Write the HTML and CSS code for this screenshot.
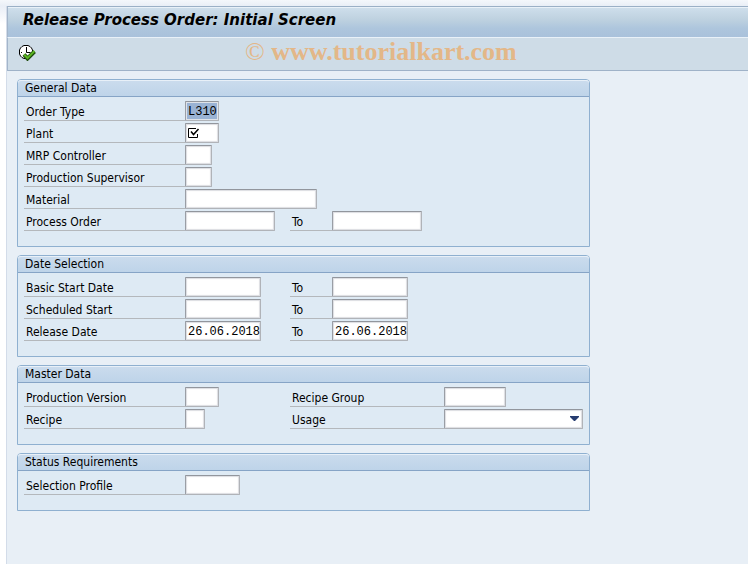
FILE: index.html
```html
<!DOCTYPE html>
<html lang="en">
<head>
    <meta charset="UTF-8">
    <meta name="viewport" content="width=device-width, initial-scale=1.0">
    <title>Release Process Order: Initial Screen</title>
    <link rel="stylesheet" href="styles.css">
</head>
<body>
    <div class="window">
        <header class="titlebar">
            <h1>Release Process Order: Initial Screen</h1>
        </header>

        <div class="toolbar">
            <button type="button" class="execute" aria-label="Execute">
                <svg width="17" height="16" viewBox="0 0 17 16">
                    <path d="M5 .5h4l2 1 1.500 1.500 1 2v4l-1 2-1.500 1.500-2 1h-4l-2-1-1.500-1.500-1-2v-4l1-2 1.500-1.500z" fill="#fff" stroke="#000"/>
                    <path d="M7.500 2v5.500h4" fill="none" stroke="#000"/>
                    <path d="M2 7h1v1H2zM7 11h1v1H7z" fill="#000"/>
                    <path d="M5 9.500l3.500 4 7-7" fill="none" stroke="#1d4a0c" stroke-width="4"/>
                    <path d="M5 9.500l3.500 3.500 7-7" fill="none" stroke="#5cb522" stroke-width="2"/>
                </svg>
            </button>
            <p class="watermark"><span>©</span> www.tutorialkart.com</p>
        </div>

        <main>
            <section class="panel">
                <h2>General Data</h2>
                <div class="fields">
                    <label for="orderType">Order Type</label>
                    <input type="text" id="orderType" class="w4 selected" value="L310">

                    <label for="plant">Plant</label>
                    <div class="required">
                        <input type="text" id="plant" class="w4" required>
                        <svg width="12" height="12" viewBox="0 0 12 12">
                            <path d="M8 1.500H.500v9h9V7" fill="none" stroke="#000"/>
                            <path d="M3 4.500l2.500 3 5-5.500" fill="none" stroke="#000" stroke-width="1.500"/>
                        </svg>
                    </div>

                    <label for="mrp">MRP Controller</label>
                    <input type="text" id="mrp" class="w3">

                    <label for="supervisor">Production Supervisor</label>
                    <input type="text" id="supervisor" class="w3">

                    <label for="material">Material</label>
                    <input type="text" id="material" class="w18">

                    <label for="orderFrom">Process Order</label>
                    <input type="text" id="orderFrom" class="w12">
                    <label for="orderTo" class="second">To</label>
                    <input type="text" id="orderTo" class="w12">
                </div>
            </section>

            <section class="panel">
                <h2>Date Selection</h2>
                <div class="fields">
                    <label for="basicFrom">Basic Start Date</label>
                    <input type="text" id="basicFrom" class="w10">
                    <label for="basicTo" class="second">To</label>
                    <input type="text" id="basicTo" class="w10">

                    <label for="schedFrom">Scheduled Start</label>
                    <input type="text" id="schedFrom" class="w10">
                    <label for="schedTo" class="second">To</label>
                    <input type="text" id="schedTo" class="w10">

                    <label for="releaseFrom">Release Date</label>
                    <input type="text" id="releaseFrom" class="w10" value="26.06.2018">
                    <label for="releaseTo" class="second">To</label>
                    <input type="text" id="releaseTo" class="w10" value="26.06.2018">
                </div>
            </section>

            <section class="panel">
                <h2>Master Data</h2>
                <div class="fields wide">
                    <label for="version">Production Version</label>
                    <input type="text" id="version" class="w4">
                    <label for="group" class="second">Recipe Group</label>
                    <input type="text" id="group" class="w8">

                    <label for="recipe">Recipe</label>
                    <input type="text" id="recipe" class="w2">
                    <label for="usage" class="second">Usage</label>
                    <div class="dropdown">
                        <select id="usage">
                            <option></option>
                        </select>
                        <svg width="9" height="5" viewBox="0 0 9 5"><path d="M0 0h9v1L5 5H4L0 1z" fill="#263c70"/></svg>
                    </div>
                </div>
            </section>

            <section class="panel">
                <h2>Status Requirements</h2>
                <div class="fields">
                    <label for="profile">Selection Profile</label>
                    <input type="text" id="profile" class="w7">
                </div>
            </section>
        </main>
    </div>
</body>
</html>
```
FILE: styles.css
```css
* {
    box-sizing: border-box;
}

body {
    margin: 0;
    padding: 6px 0 0 6px;
    min-height: 100vh;
    display: flex;
    background: linear-gradient(#f4f7fb, #e9eef6 6px, #fff 24px);
    font-family: "DejaVu Sans Condensed", "DejaVu Sans", sans-serif;
    font-size: 12px;
    color: #000;
}

.window {
    flex: 1;
    border-left: 1px solid #d3dce9;
    background: #e8eff6;
}

/* title and toolbar */
.titlebar {
    height: 31px;
    padding: 0 15px;
    border-top: 1px solid #9bb0c6;
    border-left: 1px solid #a3b5ca;
    box-shadow: inset 0 1px #e9f1f8;
    background: linear-gradient(#cfdfec, #bfd2e0 40%, #aec6dd 70%, #a9c1db);
}

.titlebar h1 {
    margin: 0;
    font-family: "DejaVu Sans", sans-serif;
    font-size: 15px;
    line-height: 27px;
    font-style: italic;
}

.toolbar {
    display: flex;
    align-items: center;
    height: 34px;
    padding: 0 11px;
    border-top: 1px solid #e9f1f8;
    border-bottom: 1px solid #9fb2c8;
    border-left: 1px solid #a3b5ca;
    background: #cedce7;
}

.execute {
    display: flex;
    padding: 0 0 2px;
    border: 0;
    background: none;
    cursor: pointer;
}

.watermark {
    margin: 0 0 4px 209px;
    font-family: "Liberation Serif", serif;
    font-size: 26px;
    line-height: 28px;
    font-weight: bold;
    color: #e3b788;
}

.watermark span {
    font-weight: normal;
}

/* group boxes */
main {
    display: flex;
    flex-direction: column;
    gap: 8px;
    padding: 8px 10px;
}

.panel {
    width: 100%;
    max-width: 573px;
    border: 1px solid #8fb0d0;
    border-radius: 4px 4px 0 0;
    background: #deeaf4;
}

.panel h2 {
    margin: 0;
    padding: 0 7px;
    font-size: 12px;
    line-height: 16px;
    font-weight: normal;
    border-bottom: 1px solid #86a4c6;
    border-radius: 3px 3px 0 0;
    box-shadow: inset 0 1px #e8f0f8;
    background: linear-gradient(#cbdced, #bed4e9);
}

.fields {
    display: grid;
    grid-template-columns: 161px 105px 42px 1fr;
    grid-auto-rows: 20px;
    row-gap: 2px;
    padding: 4px 6px 15px;
}

.fields.wide {
    grid-template-columns: 161px 105px 154px 1fr;
}

label {
    grid-column: 1;
    padding-left: 2px;
    line-height: 23px;
    border-bottom: 1px solid #b4b8bc;
}

label.second {
    grid-column: 3;
}

input,
select {
    height: 20px;
    margin: 0;
    padding: 1px 0 0 2px;
    border: 1px solid #b0b3b8;
    border-top-color: #92969d;
    border-left-color: #9a9ea5;
    border-radius: 1px;
    box-shadow: inset 0 0 1px 1px #dcdde2;
    background: #fff;
    font-family: "Liberation Mono", monospace;
    font-size: 12px;
    color: #000;
}

.w2 { width: 20px; }
.w3 { width: 27px; }
.w4 { width: 34px; }
.w7 { width: 55px; }
.w8 { width: 62px; }
.w10 { width: 76px; }
.w12 { width: 90px; }
.w18 { width: 132px; }

.selected {
    box-shadow: inset 0 0 0 1px #dfe3e9;
    background: #9ab3d4;
}

.required,
.dropdown {
    position: relative;
    justify-self: start;
}

.required svg {
    position: absolute;
    top: 4px;
    left: 3px;
    pointer-events: none;
}

.dropdown select {
    appearance: none;
    width: 139px;
}

.dropdown svg {
    position: absolute;
    top: 7px;
    right: 4px;
    pointer-events: none;
}
```
